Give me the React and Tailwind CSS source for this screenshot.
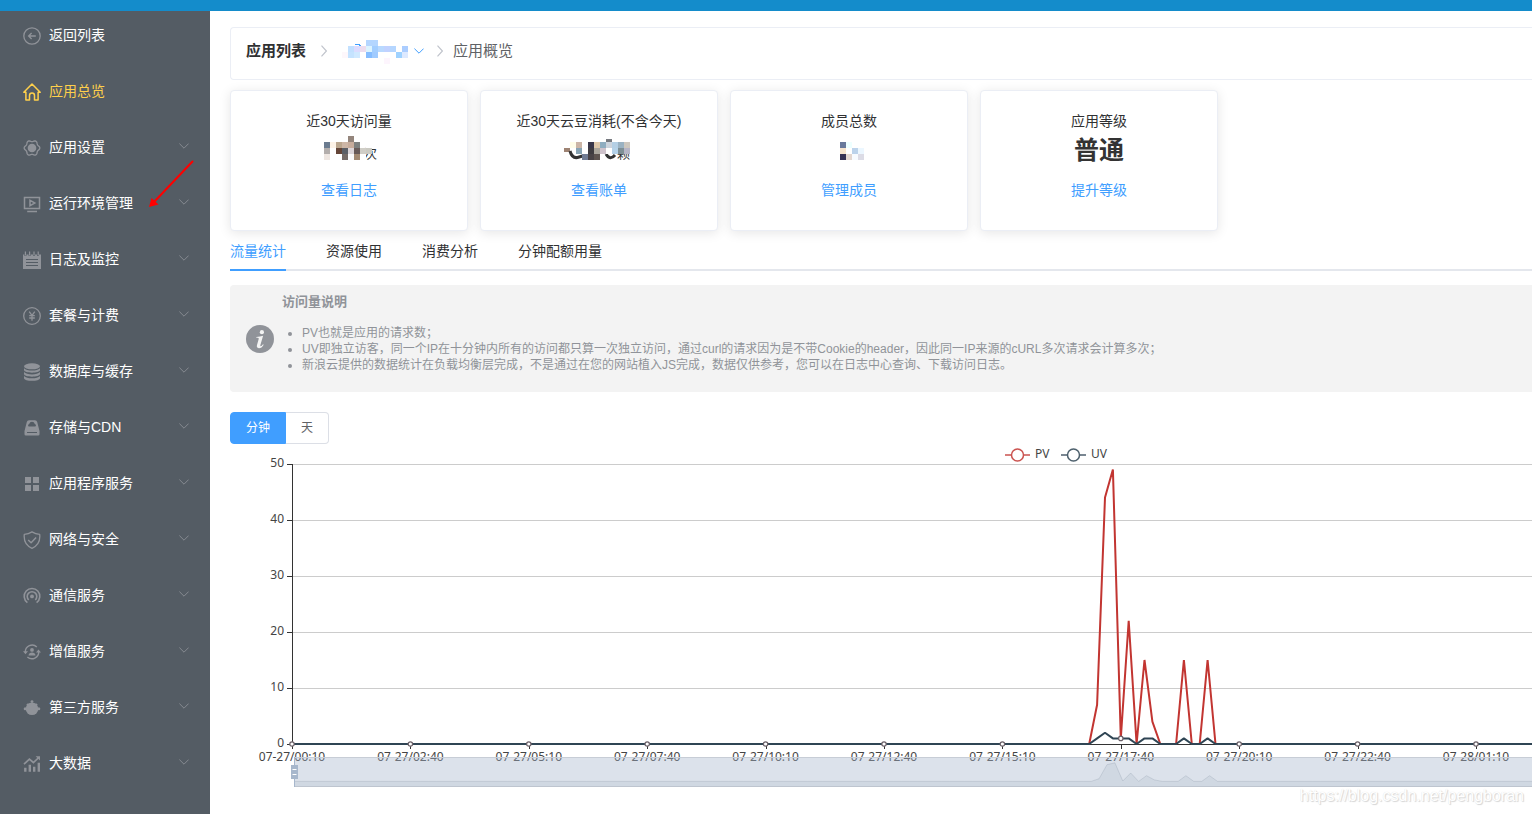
import React, { useState } from "react";

const svgProps = {
  width: 18,
  height: 18,
  viewBox: "0 0 18 18",
  fill: "none",
  stroke: "currentColor",
  strokeWidth: 1.3,
  "aria-hidden": true,
};

/* Six-lobed outline: the radius swells towards each lobe. */
const gearOutline = Array.from({ length: 72 }, (_, i) => {
  const a = (i * Math.PI) / 36;
  const r = 7.1 + 0.75 * Math.cos(6 * a);
  return `${(9 + r * Math.cos(a)).toFixed(2)},${(9 + r * Math.sin(a)).toFixed(2)}`;
}).join(" ");

const icons = {
  back: (
    <svg {...svgProps} strokeWidth="1.3">
      <circle cx="9" cy="9" r="8.2" />
      <path d="M12.8 9H5.6M8.6 6 5.6 9l3 3" />
    </svg>
  ),
  home: (
    <svg {...svgProps} strokeWidth="1.5" strokeLinejoin="round">
      <path d="M.8 9.2 9 1l8.2 8.2h-2.100V17h-3.600v-4.600a2.500 2.500 0 0 0-5 0V17H2.900V9.200Z" />
    </svg>
  ),
  gear: (
    <svg {...svgProps} strokeWidth="1.3" strokeLinejoin="round">
      <polygon points={gearOutline} />
      <circle cx="9" cy="9" r="4.300" fill="currentColor" stroke="none" />
    </svg>
  ),
  monitor: (
    <svg {...svgProps} strokeWidth="1.500">
      <path d="M1.500 2.500h15v11h-15ZM7 5.200v5.600L11.800 8ZM4.200 16.500h9.800" />
    </svg>
  ),
  notes: (
    <svg {...svgProps} stroke="none">
      <path fill="currentColor" d="M0 3.500h1.400v1.600h2V3.500h2.200v1.600h2V3.500h2.400v1.600h2V3.500h2v1.600h2V3.500H18V18H0Z" />
      <path fill="currentColor" d="M1.800.4h1.200v4H1.800ZM6 .4h1.200v4H6ZM10.400.4h1.200v4h-1.200ZM14.600.4h1.200v4h-1.200Z" />
      <path stroke="#545c64" strokeWidth="1" d="M3 8.500h12M3 11.500h12M3 14.500h12" />
    </svg>
  ),
  yen: (
    <svg {...svgProps} strokeWidth="1.3">
      <circle cx="9" cy="9" r="8.300" />
      <path d="M6.200 4.600 9 8.400l2.800-3.800M9 8.400v5.400M6.200 8.600h5.600M6.200 11h5.600" />
    </svg>
  ),
  database: (
    <svg {...svgProps} stroke="none" fill="currentColor">
      <ellipse cx="9" cy="3.300" rx="8" ry="3" />
      <path d="M1 5.200q2.400 2.300 8 2.300t8-2.300v1.900c0 3.500-16 3.500-16 0ZM1 9.100q2.400 2.300 8 2.300t8-2.300V11c0 3.500-16 3.500-16 0ZM1 13q2.400 2.300 8 2.300T17 13v2c0 3.800-16 3.800-16 0Z" />
    </svg>
  ),
  storage: (
    <svg {...svgProps} stroke="none">
      <path fill="currentColor" d="M6 1.300h6q1.800 0 2.200 1.700L16.500 12v3.300q0 1.300-1.300 1.300H2.800q-1.300 0-1.300-1.300V12L3.800 3q.4-1.700 2.200-1.700Z" />
      <path fill="#545c64" d="M6 7.600a1.400 1.400 0 0 1 .2-2.700 2.900 2.900 0 0 1 5.600 0 1.400 1.400 0 0 1 .2 2.700Z" />
      <path stroke="#545c64" strokeWidth="1" d="M4 13.500h10" />
    </svg>
  ),
  grid: (
    <svg {...svgProps} stroke="none" fill="currentColor">
      <path d="M2 2h6v6H2ZM10 2h6v6h-6ZM2 10h6v6H2ZM10 10h6v6h-6Z" />
    </svg>
  ),
  shield: (
    <svg {...svgProps} strokeWidth="1.300" strokeLinejoin="round">
      <path d="M9 .9Q12.500 3.200 16.700 3.400 17.800 13.500 9 17.300.2 13.500 1.300 3.400 5.500 3.200 9 .9Z" />
      <path strokeWidth="1.500" d="m5.200 9 2.900 2.700 5-5.200" />
    </svg>
  ),
  signal: (
    <svg {...svgProps} strokeWidth="1.600">
      <path d="M4.400 15.600a7.800 7.800 0 1 1 9.200 0" />
      <path d="M5.700 13a4.800 4.800 0 1 1 6.600 0" />
      <circle cx="9" cy="9.400" r="1.900" fill="currentColor" stroke="none" />
    </svg>
  ),
  cycle: (
    <svg {...svgProps} strokeWidth="1.400">
      <path d="M2.300 9A6.800 6.800 0 0 1 13.800 4M15.700 8.500A6.800 6.800 0 0 1 4.400 14" />
      <path d="M0 8.300h5L2.500 11.200ZM13 9.500h5L15.500 6.500Z" fill="currentColor" stroke="none" />
      <circle cx="9" cy="6.900" r="1.900" fill="currentColor" stroke="none" />
      <path d="M5.500 12.600c0-4.300 7-4.300 7 0Z" fill="currentColor" stroke="none" />
    </svg>
  ),
  blob: (
    <svg {...svgProps} stroke="none" fill="currentColor">
      <circle cx="9" cy="9.800" r="6.300" />
      <circle cx="9" cy="2.600" r="1.400" />
      <circle cx="2.200" cy="9.800" r="1.500" />
      <circle cx="15.800" cy="9.800" r="1.500" />
      <circle cx="4.900" cy="5.600" r="1.200" />
      <circle cx="13.100" cy="5.600" r="1.200" />
    </svg>
  ),
  chart: (
    <svg {...svgProps}>
      <path strokeWidth="1.700" d="M1 9.200 6.400 4.200l4 3.300L15.800 2.500" />
      <path fill="currentColor" stroke="none" d="M12.600 1.200H17v4.400Z" />
      <path strokeWidth="2.400" d="M2.300 12.700v4M6.800 9.700v7M11.200 11.700v5M15.800 7.700v9" />
    </svg>
  ),
};

const menu = [
  ["gear", "应用设置"],
  ["monitor", "运行环境管理"],
  ["notes", "日志及监控"],
  ["yen", "套餐与计费"],
  ["database", "数据库与缓存"],
  ["storage", "存储与CDN"],
  ["grid", "应用程序服务"],
  ["shield", "网络与安全"],
  ["signal", "通信服务"],
  ["cycle", "增值服务"],
  ["blob", "第三方服务"],
  ["chart", "大数据"],
];

function Chevron({ className }) {
  return (
    <svg className={className} width="10" height="6" viewBox="0 0 10 6" fill="none" stroke="currentColor" aria-hidden="true">
      <path d="M.4.6 5 5.200 9.600.6" />
    </svg>
  );
}

function Sidebar() {
  return (
    <aside className="w-[210px] shrink-0 bg-[#545c64] text-sm text-white">
      <nav>
        <a href="#list" className="mb-1 flex h-12 items-center gap-2 pl-[23px]">
          <span className="pt-0.5 text-[#909399]">{icons.back}</span>
          返回列表
        </a>
        <a href="#overview" aria-current="page" className="flex h-14 items-center gap-2 pl-[23px] text-[#ffd04b]">
          <span className="pt-0.5">{icons.home}</span>
          应用总览
        </a>
        {menu.map(([icon, label]) => (
          <button key={label} type="button" className="flex h-14 w-full items-center gap-2 pr-[21px] pl-[23px] text-left">
            <span className="pt-0.5 text-[#909399]">{icons[icon]}</span>
            {label}
            <Chevron className="mb-0.5 ml-auto text-[#868b91]" />
          </button>
        ))}
      </nav>
    </aside>
  );
}

/* Each cell is [column, row, colour] on a grid of 6px squares. */
function Mosaic({ cells, cols, rows, children }) {
  return (
    <svg width={cols * 6} height={rows * 6} viewBox={`0 0 ${cols * 6} ${rows * 6}`} shapeRendering="crispEdges" aria-hidden="true">
      {children}
      {cells.map(([c, r, fill]) => (
        <rect key={`${c}-${r}`} x={c * 6} y={r * 6} width="6" height="6" fill={fill} />
      ))}
    </svg>
  );
}

const nameCells = [
  [4, 0, "#b4d6ff"], [5, 0, "#b4d6ff"],
  [1, 1, "#c2e0ff"], [2, 1, "#dcdcff"], [3, 1, "#ecdcee"], [4, 1, "#dcf4ff"], [5, 1, "#a3ceff"],
  [6, 1, "#b9d9ff"], [7, 1, "#c0d2ff"], [8, 1, "#b5d6ff"], [10, 1, "#abcdff"],
  [0, 2, "#fdf7fb"], [1, 2, "#c5e3ff"], [2, 2, "#d0e9ff"], [4, 2, "#86bdff"], [5, 2, "#a0cbff"],
  [9, 2, "#9fd2ff"], [10, 2, "#dde9ff"],
  [7, 3, "#fdf5fd"],
];
const visitCells = [
  [4, 0, "#94857c"],
  [0, 1, "#6b7b8f"], [1, 1, "#fdf3e7"], [2, 1, "#baa68e"], [3, 1, "#cdb6a6"], [4, 1, "#c7ac9c"], [5, 1, "#7d807f"], [7, 1, "#ffffff"],
  [0, 2, "#b3aeac"], [2, 2, "#654639"], [3, 2, "#5b5f66"], [4, 2, "#dcd5d8"], [5, 2, "#685a58"], [6, 2, "#d0cec7"], [7, 2, "#cbcac2"],
  [0, 3, "#eee6e1"], [3, 3, "#756b67"], [4, 3, "#fcfcfd"], [5, 3, "#a38a73"], [6, 3, "#ffffff"],
];
const beanCells = [
  [1, 1, "#fffde8"], [2, 1, "#cbb5a6"], [4, 1, "#39374a"], [5, 1, "#dec8ab"], [6, 1, "#8fadc0"], [7, 1, "#ccd3dc"],
  [8, 1, "#b4cfe4"], [9, 1, "#9ab2c2"], [10, 1, "#cdc7be"],
  [2, 2, "#87a3b3"], [4, 2, "#3f3c40"], [5, 2, "#aaa59c"], [6, 2, "#cfc3cc"], [7, 2, "#ffffff"],
  [8, 2, "#b5d2e8"], [9, 2, "#7e8f95"], [10, 2, "#b5b5c6"],
  [3, 3, "#717c94"], [4, 3, "#494346"], [5, 3, "#5e5450"],
];
const memberCells = [
  [0, 1, "#69799b"], [1, 1, "#eeffff"],
  [0, 2, "#f6e4cd"], [2, 2, "#bcd3eb"], [3, 2, "#ecf7ff"],
  [0, 3, "#363253"], [1, 3, "#e3d7d0"], [2, 3, "#f7fbff"], [3, 3, "#dcdce6"],
];

function Breadcrumb() {
  const sep = (
    <svg width="6" height="12" viewBox="0 0 6 12" fill="none" stroke="#c0c4cc" strokeWidth="1.200" aria-hidden="true">
      <path d="M.5.7 5.400 6 .5 11.300" />
    </svg>
  );
  return (
    <nav aria-label="面包屑" className="flex h-[53px] items-center rounded-l border border-r-0 border-[#ebeef5] pb-[5px] pl-[15px] text-[15px] text-[#606266]">
      <a href="#list" className="font-bold text-[#303133]">应用列表</a>
      <span className="ml-[15px]">{sep}</span>
      <button type="button" aria-label="切换应用" className="ml-[15px] flex items-center gap-1.5 text-[#409eff]">
        <span className="pt-0.5">
          <Mosaic cells={nameCells} cols={11} rows={4}>
            <path d="M13 4.500h4l2 1.500" stroke="#409eff" fill="none" />
          </Mosaic>
        </span>
        <Chevron />
      </button>
      <span className="ml-[13px]">{sep}</span>
      <span className="ml-2.5">应用概览</span>
    </nav>
  );
}

function StatCard({ title, link, children }) {
  return (
    <section className="flex w-[238px] flex-col items-center rounded border border-[#ebeef5] bg-white pt-5 pb-[30px] text-sm leading-5 shadow-[0_2px_12px_rgba(0,0,0,0.1)]">
      <h2 className="text-[#303133]">{title}</h2>
      <div className="flex h-[38px] items-center text-[25px] font-bold text-[#333]">{children}</div>
      <a href="#detail" className="mt-[11px] text-[#409eff]">{link}</a>
    </section>
  );
}

function Stats() {
  return (
    <div className="mt-2.5 flex flex-wrap gap-3">
      <StatCard title="近30天访问量" link="查看日志">
        <span className="pb-1 pl-2.5">
          <Mosaic cells={visitCells} cols={10} rows={4}>
            <text x="40" y="22" fontSize="13" fontWeight="400" fill="#333">次</text>
          </Mosaic>
        </span>
      </StatCard>
      <StatCard title="近30天云豆消耗(不含今天)" link="查看账单">
        <span className="pr-1 pb-1">
          <Mosaic cells={beanCells} cols={11} rows={4}>
            <path d="M42 4h6" stroke="#777a80" strokeWidth="3" />
            <path d="M0 14h6" stroke="#9e8373" strokeWidth="4" />
            <g shapeRendering="auto" fill="none" stroke="#333" strokeWidth="3">
              <path d="M6 15q2 7.500 7.500 6.500l5-1.500M42 18q4 7 9 1" />
            </g>
            <text x="53" y="22" fontSize="13" fontWeight="400" fill="#333">颗</text>
          </Mosaic>
        </span>
      </StatCard>
      <StatCard title="成员总数" link="管理成员">
        <span className="pb-1 pl-1.5">
          <Mosaic cells={memberCells} cols={4} rows={4} />
        </span>
      </StatCard>
      <StatCard title="应用等级" link="提升等级">普通</StatCard>
    </div>
  );
}

function Tabs() {
  const [active, setActive] = useState(0);
  return (
    <div role="tablist" className="flex h-10 gap-10 border-b-2 border-[#e4e7ed] text-sm">
      {["流量统计", "资源使用", "消费分析", "分钟配额用量"].map((label, i) => (
        <button
          key={label}
          type="button"
          role="tab"
          aria-selected={i === active}
          onClick={() => setActive(i)}
          className={
            i === active
              ? "h-10 border-y-2 border-t-transparent border-b-[#409eff] text-[#409eff]"
              : "h-10 border-y-2 border-transparent text-[#303133]"
          }
        >
          {label}
        </button>
      ))}
    </div>
  );
}

function Notice() {
  return (
    <div className="mt-3.5 flex items-center rounded-l bg-[#f3f3f3] px-4 py-2 text-[#909399]">
      <svg className="shrink-0" width="28" height="28" viewBox="0 0 28 28" aria-hidden="true">
        <circle cx="14" cy="14" r="14" fill="currentColor" />
        <circle cx="15.900" cy="7.200" r="2.100" fill="#f3f3f3" />
        <path fill="#f3f3f3" d="M10.400 12.100q3.600-.5 6.700-1.300l-2.700 9.300q-.3 1.300.3 1.200 1-.3 2.300-2.100l.7.500q-2 3.500-4.800 3.500-2.700-.2-1.900-3.100l1.700-6q.4-1.300-1-1.300h-1.400Z" />
      </svg>
      <div className="px-2">
        <h3 className="text-[13px] leading-[18px] font-bold">访问量说明</h3>
        <ul className="mt-3.5 mb-[11px] list-disc pl-5 text-xs leading-4">
          <li>PV也就是应用的请求数；</li>
          <li>UV即独立访客，同一个IP在十分钟内所有的访问都只算一次独立访问，通过curl的请求因为是不带Cookie的header，因此同一IP来源的cURL多次请求会计算多次；</li>
          <li>新浪云提供的数据统计在负载均衡层完成，不是通过在您的网站植入JS完成，数据仅供参考，您可以在日志中心查询、下载访问日志。</li>
        </ul>
      </div>
    </div>
  );
}

function RangeSwitch() {
  const [range, setRange] = useState("分钟");
  return (
    <div role="radiogroup" aria-label="统计粒度" className="mt-5 flex text-xs">
      {["分钟", "天"].map((label) => (
        <label
          key={label}
          className={
            "flex h-8 cursor-pointer items-center border px-[15px] first-of-type:rounded-l last-of-type:rounded-r last-of-type:border-l-0 " +
            (label === range ? "border-[#409eff] bg-[#409eff] text-white" : "border-[#dcdfe6] bg-white text-[#606266]")
          }
        >
          <input type="radio" name="range" className="sr-only" checked={label === range} onChange={() => setRange(label)} />
          {label}
        </label>
      ))}
    </div>
  );
}

const STEP = 118.4 / 15;
const POINTS = 166;
const pv = { 102: 7, 103: 44, 104: 49, 105: 1, 106: 22, 108: 15, 109: 4, 113: 15, 116: 15 };
const uv = { 102: 1, 103: 2, 104: 1, 105: 1, 106: 1, 108: 1, 109: 1, 113: 1, 116: 1 };
const ticks = [
  "07-27/00:10", "07-27/02:40", "07-27/05:10", "07-27/07:40", "07-27/10:10", "07-27/12:40",
  "07-27/15:10", "07-27/17:40", "07-27/20:10", "07-27/22:40", "07-28/01:10",
];

const line = (data, x0, y0, scale) =>
  Array.from({ length: POINTS }, (_, i) => `${(x0 + i * STEP).toFixed(1)},${(y0 - (data[i] || 0) * scale).toFixed(1)}`).join(" ");

function TrafficChart() {
  return (
    <svg className="block h-[359px] w-full" fontSize="12" fill="#444" role="img" aria-label="PV 与 UV 走势">
      {[0, 10, 20, 30, 40, 50].map((v) => (
        <g key={v}>
          {v > 0 && <path d={`M62 ${300.5 - v * 5.6}H1500`} stroke="#ccc" />}
          <path d={`M57 ${300.5 - v * 5.6}h5`} stroke="#333" />
          <text x="54" y={303 - v * 5.6} textAnchor="end">{v}</text>
        </g>
      ))}
      <path d="M62.500 20v281M62 300.500H1500" stroke="#333" fill="none" />
      {ticks.map((t, i) => (
        <g key={t}>
          <path d={`M${Math.round(62 + i * 118.4) + 0.5} 300v5`} stroke="#333" />
          <text x={62 + i * 118.4} y="317" textAnchor="middle">{t}</text>
        </g>
      ))}

      <polyline points={line(pv, 62, 300, 5.6)} fill="none" stroke="#c23531" strokeWidth="2" strokeLinejoin="bevel" />
      <polyline points={line(uv, 62, 300, 5.6)} fill="none" stroke="#2f4554" strokeWidth="2" strokeLinejoin="bevel" />
      {ticks.map((t, i) => (
        <circle key={t} cx={62 + i * 118.4} cy={300 - (uv[i * 15] || 0) * 5.6} r="2.200" fill="#fff" stroke="#6b6068" strokeWidth="1.200" />
      ))}

      <g fill="none" strokeWidth="1.500" opacity=".85">
        <path d="M775 11h25" stroke="#c23531" />
        <circle cx="787.500" cy="11" r="6" fill="#fff" stroke="#c23531" />
        <path d="M831 11h25" stroke="#2f4554" />
        <circle cx="843.500" cy="11" r="6" fill="#fff" stroke="#2f4554" />
      </g>
      <text x="805" y="14">PV</text>
      <text x="861" y="14">UV</text>

      <path d="M64 313.500H1500M64 342.500H1500" stroke="#ddd" />
      <polygon points={`64,343 ${line(pv, 64, 337.4, 0.38)} 1500,337.4 1500,343`} fill="#2f4554" opacity=".09" />
      <polyline points={line(pv, 64, 337.4, 0.38)} fill="none" stroke="#2f4554" strokeWidth=".6" opacity=".3" />
      <rect x="64" y="313" width="1436" height="30" fill="#a7b7cc" opacity=".4" />
      <path d="M64.500 313v30" stroke="#a7b7cc" />
      <rect x="61" y="321" width="7" height="14" fill="#a7b7cc" />
      <path d="M62.500 325.500h4M62.500 330.500h4" stroke="#fff" />
    </svg>
  );
}

export default function App() {
  return (
    <div className="relative flex min-h-screen flex-col bg-white font-['Liberation_Sans','Noto_Sans_CJK_SC',sans-serif]">
      <header className="h-[11px] bg-[#148ccb]" />
      <div className="flex flex-1">
        <Sidebar />
        <main className="min-w-0 flex-1 overflow-hidden pt-4 pl-5">
          <Breadcrumb />
          <Stats />
          <Tabs />
          <Notice />
          <RangeSwitch />
          <div className="font-['Noto_Sans','Noto_Sans_CJK_SC',sans-serif]">
            <TrafficChart />
          </div>
        </main>
      </div>
      <svg className="pointer-events-none absolute top-[158px] left-[146px]" width="52" height="52" viewBox="0 0 52 52" aria-hidden="true">
        <path d="M46.500 3.500 8 44" stroke="#f00" strokeWidth="2" strokeLinecap="round" />
        <path d="M3 49 5.500 40 12.500 46.500Z" fill="#f00" />
      </svg>
      <span className="absolute right-2 bottom-2 text-base leading-5 text-white [text-shadow:1px_1px_1px_#d4d4d4,0_0_1px_#ddd]">
        https://blog.csdn.net/pengboran
      </span>
    </div>
  );
}
